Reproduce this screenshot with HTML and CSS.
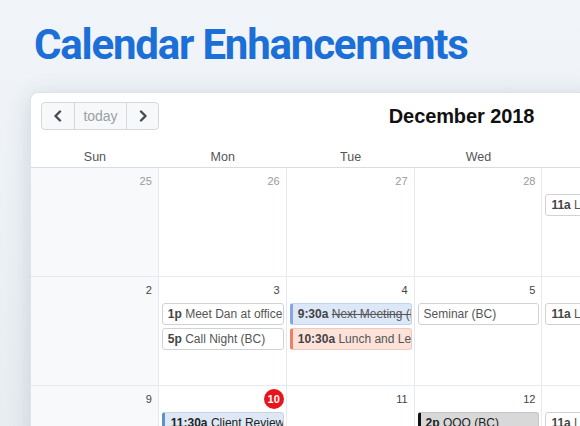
FILE: index.html
```html
<!DOCTYPE html>
<html lang="en">
<head>
    <meta name="viewport" content="width=device-width,initial-scale=1.0">
    <title>Calendar Enhancements</title>
    <link rel="stylesheet" href="styles.css">
</head>
<body>

    <h1 class="page-title">Calendar Enhancements</h1>

    <div class="calendar-card">
        <div class="toolbar">
            <div class="btn-group">
                <button class="btn btn-icon" aria-label="prev">
                    <svg width="10" height="12" viewBox="0 0 10 12"><path d="M7 1.5 L2.5 6 L7 10.5" fill="none" stroke="#454b52" stroke-width="2.4" stroke-linecap="round" stroke-linejoin="round"/></svg>
                </button>
                <button class="btn btn-today">today</button>
                <button class="btn btn-icon" aria-label="next">
                    <svg width="10" height="12" viewBox="0 0 10 12"><path d="M3 1.5 L7.5 6 L3 10.5" fill="none" stroke="#454b52" stroke-width="2.4" stroke-linecap="round" stroke-linejoin="round"/></svg>
                </button>
            </div>
            <h2 class="month-title">December 2018</h2>
            <div class="btn-group view-group">
                <button class="btn">month</button>
                <button class="btn">week</button>
                <button class="btn">day</button>
            </div>
        </div>

        <div class="day-names">
            <div>Sun</div><div>Mon</div><div>Tue</div><div>Wed</div><div>Thu</div><div>Fri</div><div>Sat</div>
        </div>

        <!-- week 1 -->
        <div class="week">
            <div class="day weekend other"><div class="num">25</div></div>
            <div class="day other"><div class="num">26</div></div>
            <div class="day other"><div class="num">27</div></div>
            <div class="day other"><div class="num">28</div></div>
            <div class="day other"><div class="num">29</div>
                <div class="event"><b>11a</b> Lunch (BC)</div>
            </div>
            <div class="day other"><div class="num">30</div></div>
            <div class="day weekend"><div class="num">1</div></div>
        </div>

        <!-- week 2 -->
        <div class="week">
            <div class="day weekend"><div class="num">2</div></div>
            <div class="day"><div class="num">3</div>
                <div class="event"><b>1p</b> Meet Dan at office</div>
                <div class="event"><b>5p</b> Call Night (BC)</div>
            </div>
            <div class="day"><div class="num">4</div>
                <div class="event event-blue"><b>9:30a</b> <s>Next Meeting (BC)</s></div>
                <div class="event event-red"><b>10:30a</b> Lunch and Learn</div>
            </div>
            <div class="day"><div class="num">5</div>
                <div class="event">Seminar (BC)</div>
            </div>
            <div class="day"><div class="num">6</div>
                <div class="event"><b>11a</b> Lunch (BC)</div>
            </div>
            <div class="day"><div class="num">7</div></div>
            <div class="day weekend"><div class="num">8</div></div>
        </div>

        <!-- week 3 -->
        <div class="week">
            <div class="day weekend"><div class="num">9</div></div>
            <div class="day"><div class="num"><span class="today-badge">10</span></div>
                <div class="event event-client"><b>11:30a</b> Client Review (BC)</div>
            </div>
            <div class="day"><div class="num">11</div></div>
            <div class="day"><div class="num">12</div>
                <div class="event event-grey"><b>2p</b> OOO (BC)</div>
            </div>
            <div class="day"><div class="num">13</div>
                <div class="event"><b>11a</b> Lunch (BC)</div>
            </div>
            <div class="day"><div class="num">14</div></div>
            <div class="day weekend"><div class="num">15</div></div>
        </div>
    </div>

</body>
</html>
```

FILE: styles.css
```css
html, body {
    height: 100%;
}

body {
    margin: 0;
    overflow: hidden;
    background: linear-gradient(to bottom, #f1f5f9, #e8edf2);
    font-family: 'Liberation Sans', Arial, sans-serif;
    color: #333;
}

.page-title {
    margin: 0;
    padding: 21px 0 0 34px;
    height: 70px;
    box-sizing: border-box;
    font-family: Roboto, 'Liberation Sans', sans-serif;
    font-weight: 700;
    font-size: 42px;
    line-height: 48px;
    letter-spacing: -1.2px;
    color: #1b6fd7;
}

.calendar-card {
    margin-left: 30px;
    margin-top: 22px;
    width: 895px;
    background: #fff;
    border: 1px solid #dfe3e8;
    border-radius: 8px;
    box-shadow: 0 4px 24px rgba(40, 55, 75, 0.16);
}

.toolbar {
    display: flex;
    align-items: center;
    justify-content: space-between;
    padding: 9px 10px 0 10px;
    height: 28px;
}

.btn-group {
    display: flex;
    border: 1px solid #d3d9e0;
    border-radius: 4px;
    background: #f7f8fa;
    height: 26px;
}

.btn {
    border: none;
    border-left: 1px solid #d3d9e0;
    background: transparent;
    padding: 0;
    font-family: inherit;
    font-size: 14px;
    color: #9aa0a6;
    display: flex;
    align-items: center;
    justify-content: center;
}

.btn:first-child {
    border-left: none;
}

.btn-icon {
    width: 32px;
}

.btn-today {
    width: 52px;
}

.view-group {
    width: 150px;
}

.view-group .btn {
    flex: 1;
}

.month-title {
    margin: 0;
    font-size: 20px;
    font-weight: 700;
    color: #111;
    letter-spacing: -0.1px;
}

.day-names {
    display: grid;
    grid-template-columns: repeat(7, minmax(0, 1fr));
    margin-top: 16px;
    height: 21px;
    line-height: 22px;
    border-bottom: 1px solid #d8dde3;
    font-size: 12.5px;
    color: #555;
    text-align: center;
}

.week {
    display: grid;
    grid-template-columns: repeat(7, minmax(0, 1fr));
    height: 108px;
    border-bottom: 1px solid #e6e9ee;
}

.day {
    min-width: 0;
    border-right: 1px solid #e6e9ee;
    padding: 0 2px 0 3px;
    display: flex;
    flex-direction: column;
    gap: 3px;
}

.weekend {
    background: #f8f9fb;
}

.num {
    height: 23px;
    line-height: 26px;
    text-align: right;
    padding-right: 4px;
    font-size: 11px;
    color: #444;
}

.other .num {
    color: #9a9a9a;
}

.today-badge {
    display: inline-block;
    width: 20px;
    height: 20px;
    margin-top: 1px;
    margin-right: -4px;
    line-height: 20px;
    border-radius: 50%;
    background: #e8141c;
    color: #fff;
    font-weight: 700;
    text-align: center;
}

.event {
    height: 22px;
    box-sizing: border-box;
    border: 1px solid #cfd3d8;
    border-radius: 3px;
    padding: 0 5px;
    line-height: 20px;
    font-size: 12px;
    color: #555;
    white-space: nowrap;
    overflow: hidden;
    background: #fff;
}

.event b {
    color: #444;
}

.event-blue {
    background: #dce7f8;
    border-color: #c3d3ee;
    border-left: 3px solid #86a6df;
    padding-left: 5px;
}

.event-red {
    background: #fde2da;
    border-color: #f3c7bb;
    border-left: 3px solid #ee7e67;
    padding-left: 5px;
}

.event-client {
    background: #dde8f4;
    border-color: #c6d5e6;
    border-left: 3px solid #5e8fce;
    padding-left: 6px;
    color: #222;
}

.event-client b {
    color: #222;
}

.event-grey {
    background: #d8d8d8;
    border-color: #c6c6c6;
    border-left: 3px solid #111;
    padding-left: 5px;
    color: #222;
}

.event-grey b {
    color: #222;
}
```
